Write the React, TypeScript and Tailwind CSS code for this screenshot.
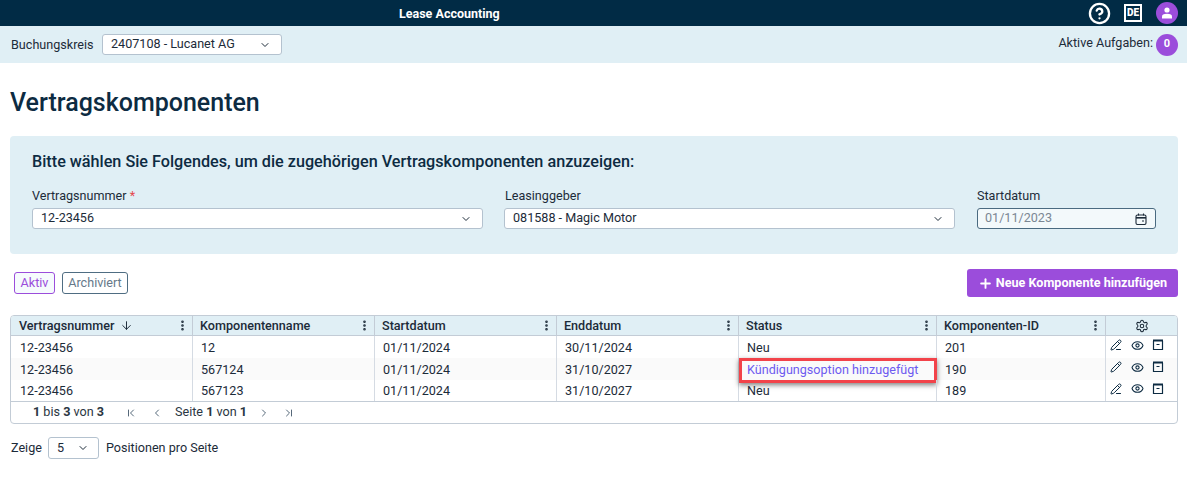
import { ArrowDown, ChevronDown, ChevronFirst, ChevronLast, ChevronLeft, ChevronRight, CircleHelp, Eye, EllipsisVertical, Pencil, Plus, Settings, PencilLine } from "lucide-react";

const columns = [
  { label: "Vertragsnummer", width: "w-[182px]", sort: true, pad: "pl-2" },
  { label: "Komponentenname", width: "w-[182px]", pad: "pl-[7px]" },
  { label: "Startdatum", width: "w-[182px]", pad: "pl-[7px]" },
  { label: "Enddatum", width: "w-[182px]", pad: "pl-[7px]" },
  { label: "Status", width: "w-[198px]", pad: "pl-[7px]" },
  { label: "Komponenten-ID", width: "w-[169px]", pad: "pl-[7px]" },
];

const rows = [
  { nr: "12-23456", name: "12", start: "01/11/2024", end: "30/11/2024", status: "Neu", id: "201", h: "h-[22px]", pad: "pt-[3px]" },
  { nr: "12-23456", name: "567124", start: "01/11/2024", end: "31/10/2027", status: "Kündigungsoption hinzugefügt", id: "190", h: "h-[22px]", pad: "pt-[3px]", alt: true, link: true },
  { nr: "12-23456", name: "567123", start: "01/11/2024", end: "31/10/2027", status: "Neu", id: "189", h: "h-[21px]", pad: "pt-[2px]" },
];

function SelectBox({ value, className }: { value: string; className: string }) {
  return (
    <div className={`flex h-[21px] items-center justify-between rounded-[3px] border border-[#b4c2cf] bg-white pl-2 pr-[10px] text-[#1c2b39] ${className}`}>
      <span className="-mt-px">{value}</span>
      <ChevronDown className="h-3 w-3 text-[#1c2b39]" strokeWidth={2} />
    </div>
  );
}

function ArchiveIcon() {
  return (
    <svg viewBox="0 0 12 12" className="ml-2 h-3 w-3" fill="none" stroke="currentColor">
      <path d="M1 1.5h10" strokeWidth="2" />
      <path d="M1.5 2v8.5h9V2" strokeWidth="1.2" />
      <path d="M4.5 5.5h3" strokeWidth="1.2" />
    </svg>
  );
}

export default function App() {
  return (
    <div className="h-[494px] overflow-hidden bg-white font-['Roboto',sans-serif] text-[12.6px] text-[#1c2b39]">
      <header className="relative flex h-[26px] items-center justify-end bg-[#012b45] pr-[9px] text-white">
        <span className="absolute left-[399px] top-[6px] text-[12.5px] font-bold leading-[16px]">Lease Accounting</span>
        <div className="flex items-center">
          <CircleHelp className="h-[23px] w-[23px]" strokeWidth={2.4} />
          <div className="ml-[13px] flex h-[18px] w-[18px] items-center justify-center border-2 border-white text-[10px] font-black leading-none">DE</div>
          <div className="ml-[14px] flex h-[22px] w-[22px] items-center justify-center rounded-full bg-[#9b4ddb]">
            <svg viewBox="0 0 12 12" className="h-3 w-3" fill="white">
              <circle cx="6" cy="3" r="2.6" />
              <path d="M1 11.5V9.5C1 7.8 2.5 6.8 6 6.8s5 1 5 2.7v2z" />
            </svg>
          </div>
        </div>
      </header>

      <div className="flex h-[37px] items-center justify-between bg-[#e0eff5] pl-[10px] pr-[9px]">
        <div className="flex items-center">
          <span className="ml-px mt-[2px] w-[82px] whitespace-nowrap">Buchungskreis</span>
          <SelectBox value="2407108 - Lucanet AG" className="ml-[9px] w-[180px]" />
        </div>
        <div className="flex items-center">
          <span className="-mt-[3px]">Aktive Aufgaben:</span>
          <div className="ml-[3px] flex h-[22px] w-[22px] items-center justify-center rounded-full bg-[#9b4ddb] text-[11px] font-bold text-white">0</div>
        </div>
      </div>

      <main className="pl-[10px] pr-[9px]">
        <h1 className="mt-[25px] text-[25px] font-medium leading-[30px] text-[#0d2b42]">Vertragskomponenten</h1>

        <section className="mt-[18px] h-[118px] rounded-[4px] bg-[#e0eff5] px-[22px] pt-[16px]">
          <h2 className="text-[16.2px] font-medium leading-[20px] text-[#0d2b42]">Bitte wählen Sie Folgendes, um die zugehörigen Vertragskomponenten anzuzeigen:</h2>
          <div className="mt-[16px] flex">
            <div className="w-[451px]">
              <label className="block leading-[16px]">Vertragsnummer <span className="text-[#e5484d]">*</span></label>
              <SelectBox value="12-23456" className="mt-[4px] w-full" />
            </div>
            <div className="ml-[21px] w-[451px]">
              <label className="block pl-px leading-[16px]">Leasinggeber</label>
              <SelectBox value="081588 - Magic Motor" className="mt-[4px] w-full" />
            </div>
            <div className="ml-[22px] w-[179px]">
              <label className="block leading-[16px]">Startdatum</label>
              <div className="mt-[4px] flex h-[21px] items-center justify-between rounded-[3px] border border-[#4a6a80] bg-[#f3f9fb] pl-[7px] pr-[8px] text-[#7b8794]">
                <span>01/11/2023</span>
                <svg viewBox="0 0 12 12" className="h-3 w-3 text-[#1c2b39]" fill="none" stroke="currentColor" strokeWidth="1.1">
                  <rect x="1" y="2" width="10" height="9.5" rx="1.5" />
                  <path d="M1 4.8h10" strokeWidth="1.6" />
                  <path d="M3.5 0.5v2M8.5 0.5v2M7 8h2" />
                </svg>
              </div>
            </div>
          </div>
        </section>

        <div className="mt-[15px] flex items-center justify-between">
          <div className="ml-1 flex items-center gap-[7px]">
            <button className="flex h-[22px] w-[41px] items-center justify-center rounded-[3px] border border-[#9b4ddb] bg-[#f6fbfd] text-[#9b4ddb]">Aktiv</button>
            <button className="flex h-[22px] w-[66px] items-center justify-center rounded-[3px] border border-[#4f6d82] text-[#66798a]">Archiviert</button>
          </div>
          <button className="flex h-[28px] w-[211px] items-center justify-center gap-[3px] rounded-[3px] bg-[#9b4ddb] text-[12.6px] font-bold text-white">
            <Plus className="h-[15px] w-[15px]" strokeWidth={3} />
            Neue Komponente hinzufügen
          </button>
        </div>

        <div className="mt-[18px] overflow-hidden rounded-[4px] border border-[#c3ccd6]">
          <div className="flex h-[20px] border-b border-[#c3ccd6] bg-[#e0eff5] font-medium leading-[19px]">
            {columns.map((col) => (
              <div key={col.label} className={`flex ${col.width} ${col.pad} items-center justify-between border-r border-[#c3ccd6] pr-[3px]`}>
                <span className="flex items-center">
                  {col.label}
                  {col.sort && <ArrowDown className="ml-[6px] h-[13px] w-[13px]" strokeWidth={1.8} />}
                </span>
                <EllipsisVertical className="h-[13px] w-[13px]" strokeWidth={2.8} />
              </div>
            ))}
            <div className="flex flex-1 items-center justify-center">
              <Settings className="h-[14px] w-[14px]" strokeWidth={1.8} />
            </div>
          </div>

          {rows.map((row) => (
            <div key={row.id} className={`flex ${row.h} items-center ${row.alt ? "bg-[#fafafa]" : "bg-white"}`}>
              <div className={`flex h-full w-[182px] items-center border-r border-[#d5dbe3] pl-[9px] ${row.pad}`}>{row.nr}</div>
              <div className={`flex h-full w-[182px] items-center border-r border-[#d5dbe3] pl-[8px] ${row.pad}`}>{row.name}</div>
              <div className={`flex h-full w-[182px] items-center border-r border-[#d5dbe3] pl-[8px] ${row.pad}`}>{row.start}</div>
              <div className={`flex h-full w-[182px] items-center border-r border-[#d5dbe3] pl-[8px] ${row.pad}`}>{row.end}</div>
              <div className={`relative flex h-full w-[198px] items-center border-r border-[#d5dbe3] pl-[8px] ${row.pad} ${row.link ? "text-[#6d5bf0]" : ""}`}>
                {row.status}
                {row.link && (
                  <div className="absolute left-0 top-0 h-[25px] w-[198px] border-[3px] border-[#f2434a] shadow-[0_2px_5px_rgba(0,0,0,0.5)]" />
                )}
              </div>
              <div className={`flex h-full w-[169px] items-center border-r border-[#d5dbe3] pl-[8px] ${row.pad}`}>{row.id}</div>
              <div className="flex flex-1 -translate-y-[2px] items-center pl-[4px] text-[#0d2b42]">
                {row.link ? <Pencil className="h-3 w-3" strokeWidth={2} /> : <PencilLine className="h-3 w-3" strokeWidth={2} />}
                <Eye className="ml-[9px] h-[13px] w-[13px]" strokeWidth={2} />
                <ArchiveIcon />
              </div>
            </div>
          ))}

          <div className="flex h-[22px] items-center border-t border-[#c3ccd6] pl-[22px] text-[#2a3642]">
            <span className="w-[71px] whitespace-nowrap"><b className="font-bold">1</b> bis <b className="font-bold">3</b> von <b className="font-bold">3</b></span>
            <ChevronFirst className="ml-[21px] h-3 w-3 text-[#56697a]" strokeWidth={2} />
            <ChevronLeft className="ml-[14px] h-3 w-3 text-[#56697a]" strokeWidth={2} />
            <span className="ml-[12px] w-[71px] whitespace-nowrap">Seite <b className="font-bold">1</b> von <b className="font-bold">1</b></span>
            <ChevronRight className="ml-[12px] h-3 w-3 text-[#56697a]" strokeWidth={2} />
            <ChevronLast className="ml-[13px] h-3 w-3 text-[#56697a]" strokeWidth={2} />
          </div>
        </div>

        <div className="mt-[13px] flex items-center">
          <span className="ml-px w-[30px] whitespace-nowrap">Zeige</span>
          <div className="ml-[7px] flex h-[22px] w-[51px] items-center justify-between rounded-[3px] border border-[#b4c2cf] pl-[8px] pr-[9px]">
            <span>5</span>
            <ChevronDown className="h-3 w-3" strokeWidth={2} />
          </div>
          <span className="ml-[7px]">Positionen pro Seite</span>
        </div>
      </main>
    </div>
  );
}
